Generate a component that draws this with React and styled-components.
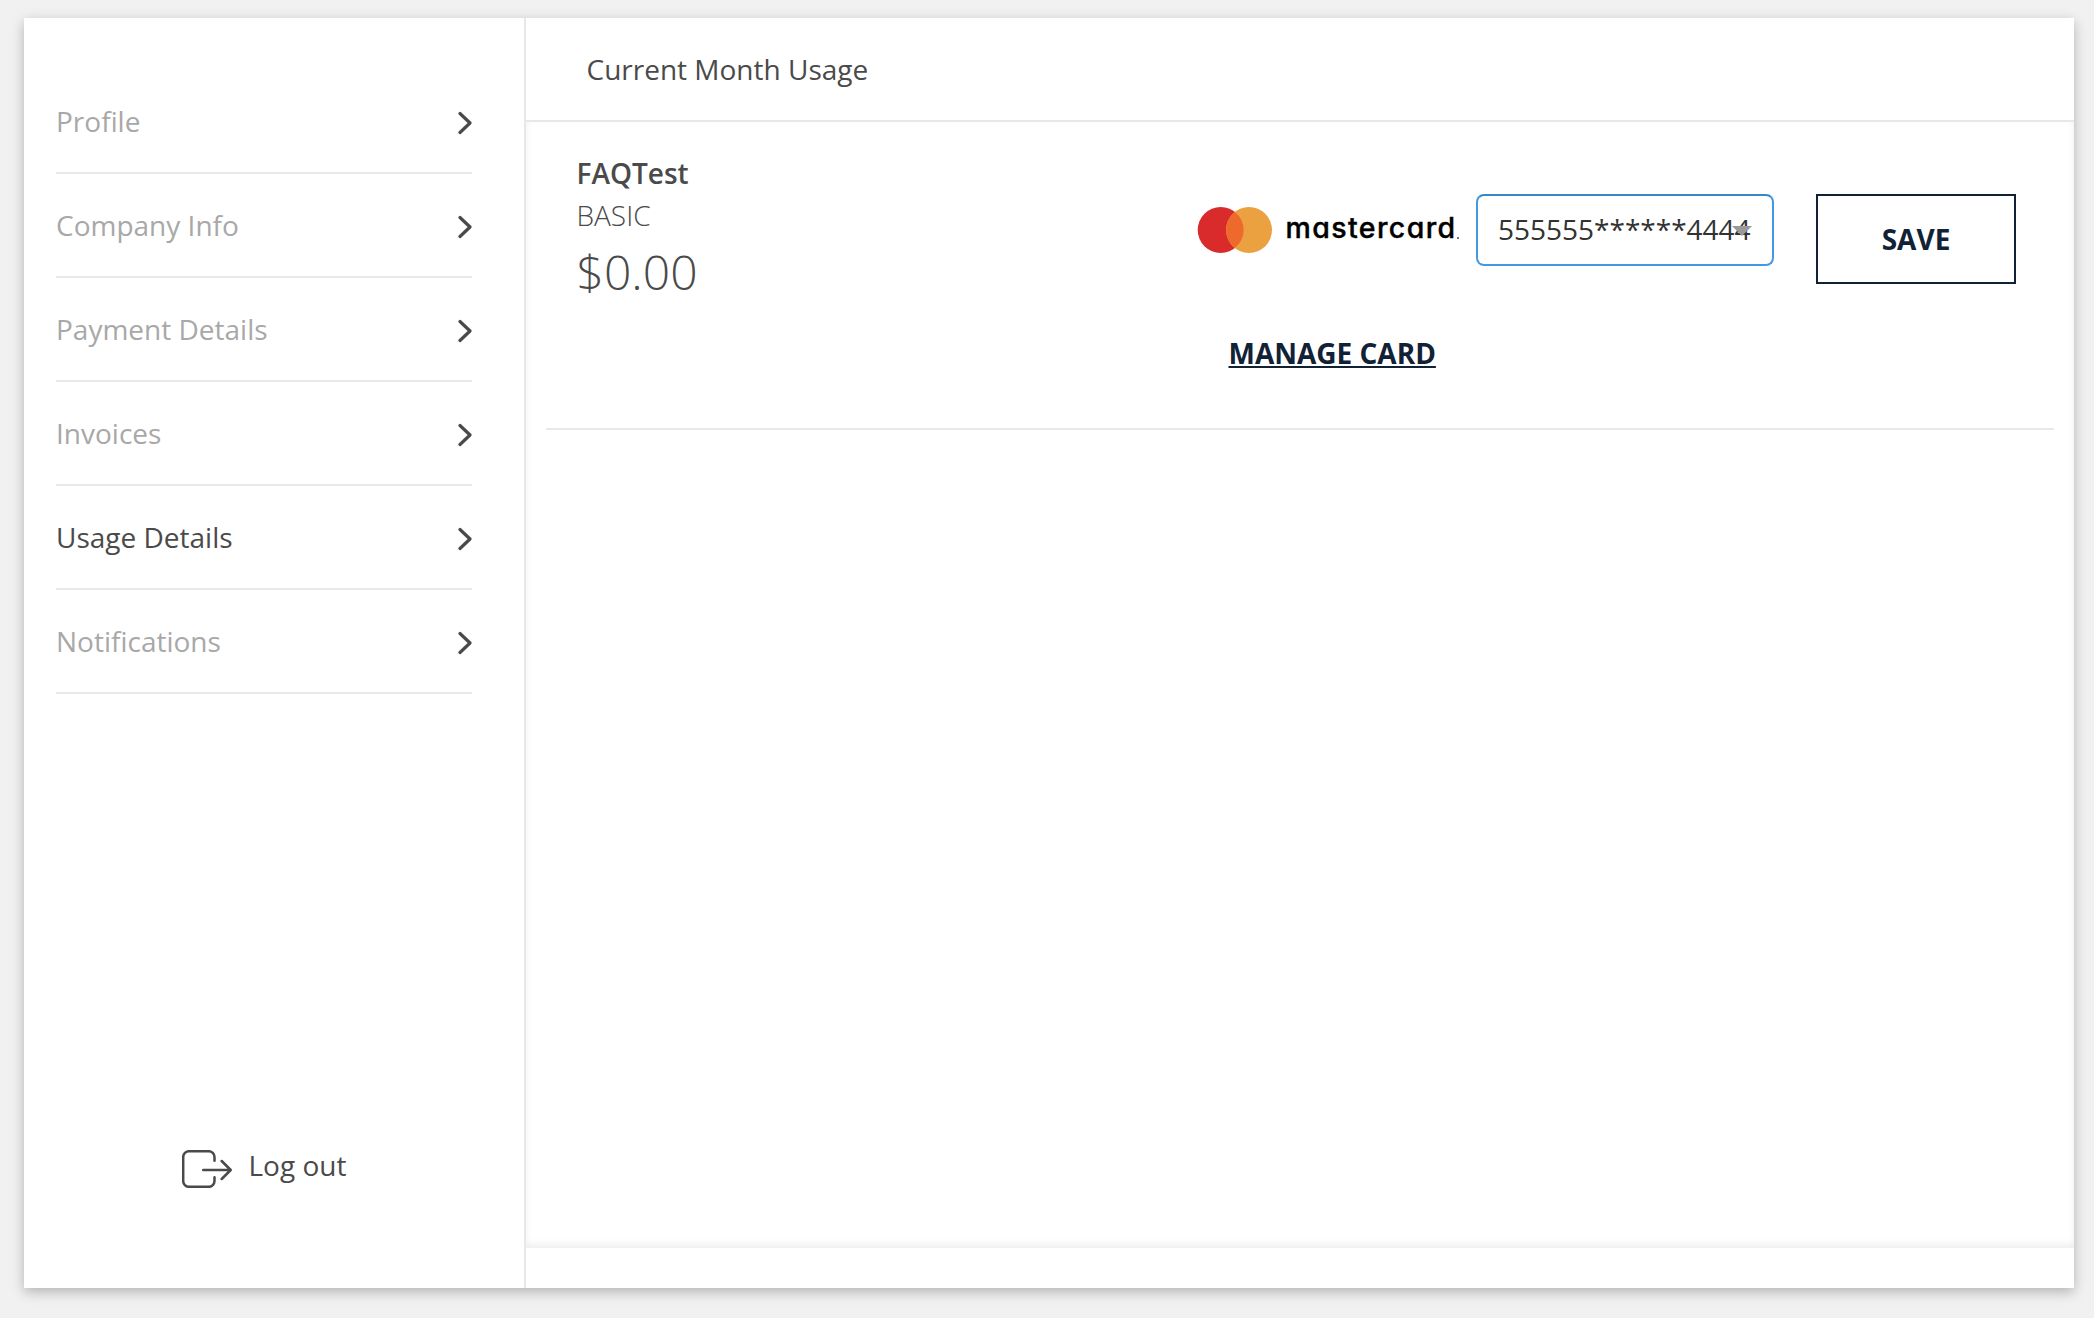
import React from "react";
import styled, { createGlobalStyle } from "styled-components";

const ink = "#4a4a4a";
const navy = "#112236";
const line = "#e8e8e8";

const GlobalStyle = createGlobalStyle`
  *, *::before, *::after { box-sizing: border-box; }
  html, body { margin: 0; padding: 0; background: #f1f1f1; }
  body {
    font-family: "Open Sans", "Noto Sans", sans-serif;
    font-size: 28px;
    line-height: 38px;
    color: ${ink};
  }
`;

const Page = styled.div`
  height: 1318px;
  padding: 18px 20px 30px 24px;
  background: #f1f1f1;
  overflow: hidden;
`;

const Card = styled.div`
  display: flex;
  height: 100%;
  background: #fff;
  box-shadow: 0 4px 12px 0 rgba(0, 0, 0, 0.26);
`;

const Sidebar = styled.aside`
  display: flex;
  flex-direction: column;
  width: 502px;
  padding: 52px 52px 93px 32px;
  border-right: 2px solid ${line};
`;

const NavItem = styled.a`
  display: flex;
  align-items: center;
  justify-content: space-between;
  height: 104px;
  border-bottom: 2px solid ${line};
  color: ${(p) => (p.$active ? ink : "#a8a8a8")};
`;

const Chevron = styled.svg`
  display: block;
  width: 14px;
  height: 24px;
  margin-top: 4px;
  fill: none;
  stroke: ${ink};
  stroke-width: 3.2;
  stroke-linecap: round;
  stroke-linejoin: round;
`;

const Logout = styled.a`
  display: flex;
  align-items: center;
  gap: 16.5px;
  margin: auto 0 0 126px;
  padding-bottom: 7px;
`;

const LogoutIcon = styled.svg`
  display: block;
  width: 50px;
  height: 38px;
  margin-top: 8px;
  fill: none;
  stroke: ${ink};
  stroke-width: 2.5;
  stroke-linecap: round;
  stroke-linejoin: round;
`;

const Main = styled.main`
  display: flex;
  flex: 1;
  flex-direction: column;
`;

const Header = styled.header`
  display: flex;
  align-items: center;
  height: 104px;
  padding-left: 60.5px;
  border-bottom: 2px solid ${line};
`;

const Content = styled.section`
  flex: 1;
  padding: 0 20px;
  margin-bottom: 40px;
  box-shadow: inset 0 -4px 10px -2px rgba(0, 0, 0, 0.09);
`;

const PlanRow = styled.div`
  display: flex;
  justify-content: space-between;
  height: 308px;
  padding: 32px 38px 0 30.5px;
  border-bottom: 2px solid ${line};
`;

const Plan = styled.div`
  display: flex;
  flex-direction: column;
`;

const PlanName = styled.strong`
  font-weight: 600;
`;

const PlanTier = styled.span`
  margin-top: 4px;
  font-weight: 300;
`;

const PlanPrice = styled.span`
  margin-top: 5px;
  font-size: 48px;
  line-height: 66px;
  font-weight: 300;
`;

const Billing = styled.div`
  display: flex;
  align-items: flex-start;
  padding-top: 40px;
`;

const CardColumn = styled.div`
  display: flex;
  flex-direction: column;
  align-items: flex-start;
`;

const CardPicker = styled.div`
  display: flex;
  align-items: center;
  height: 72px;
`;

const Brand = styled.div`
  display: flex;
  align-items: center;
  width: 279px;
`;

const BrandMark = styled.svg`
  display: block;
  width: 75px;
  height: 46px;
`;

const BrandName = styled.span`
  margin: -5px 0 0 13.5px;
  font-family: Inter, "Open Sans", sans-serif;
  font-feature-settings: "cv11" 1;
  font-size: 28.5px;
  font-weight: 500;
  letter-spacing: 1.4px;
  color: #000;
  -webkit-text-stroke: 0.4px #000;
`;

const BrandDot = styled.i`
  width: 2px;
  height: 2px;
  margin: 15px 0 0 0.5px;
  background: #777;
`;

const Select = styled.div`
  position: relative;
  width: 298px;
  height: 72px;
  padding: 14px 0 0 20px;
  border: 2px solid #4299e1;
  border-top-color: #3a87c8;
  border-radius: 8px;
  color: #333;
  white-space: nowrap;

  &::after {
    content: "";
    position: absolute;
    top: 30px;
    right: 20px;
    border: 10px solid transparent;
    border-top-color: #999;
    border-bottom: 0;
  }
`;

const SaveButton = styled.button`
  width: 200px;
  height: 90px;
  margin-left: 42px;
  padding: 0;
  border: 2px solid ${navy};
  background: #fff;
  font: 700 28px/38px "Open Sans", sans-serif;
  color: ${navy};
`;

const ManageLink = styled.a`
  margin: 68px 0 0 31.5px;
  font-weight: 700;
  color: ${navy};
  text-decoration: underline;
  text-decoration-thickness: 2px;
  text-underline-offset: 2px;
  text-decoration-skip-ink: none;
`;

const items = [
  "Profile",
  "Company Info",
  "Payment Details",
  "Invoices",
  "Usage Details",
  "Notifications",
];

export default function App() {
  return (
    <>
      <GlobalStyle />
      <Page>
        <Card>
          <Sidebar>
            <nav>
              {items.map((label) => (
                <NavItem key={label} $active={label === "Usage Details"}>
                  <span>{label}</span>
                  <Chevron viewBox="0 0 14 24">
                    <path d="M2 2.5 12 12 2 21.5" />
                  </Chevron>
                </NavItem>
              ))}
            </nav>
            <Logout>
              <LogoutIcon viewBox="0 0 50 38">
                <path d="M32.5 10.7V7a5.8 5.8 0 0 0-5.8-5.8H7A5.8 5.8 0 0 0 1.2 7v24A5.8 5.8 0 0 0 7 36.8h19.7a5.8 5.8 0 0 0 5.8-5.8v-3.7" />
                <path d="M21.2 20h27M39.7 11l9 9-9 9" />
              </LogoutIcon>
              <span>Log out</span>
            </Logout>
          </Sidebar>
          <Main>
            <Header>Current Month Usage</Header>
            <Content>
              <PlanRow>
                <Plan>
                  <PlanName>FAQTest</PlanName>
                  <PlanTier>BASIC</PlanTier>
                  <PlanPrice>$0.00</PlanPrice>
                </Plan>
                <Billing>
                  <CardColumn>
                    <CardPicker>
                      <Brand>
                        <BrandMark viewBox="0 0 75 46">
                          <circle cx="23.7" cy="23" r="23" fill="#d92b2b" />
                          <circle cx="52" cy="23" r="23" fill="#eba13f" />
                          <path d="M37.85 4.9a23 23 0 0 1 0 36.2a23 23 0 0 1 0-36.2z" fill="#ed6a2c" />
                        </BrandMark>
                        <BrandName>mastercard</BrandName>
                        <BrandDot />
                      </Brand>
                      <Select>555555******4444</Select>
                    </CardPicker>
                    <ManageLink>MANAGE CARD</ManageLink>
                  </CardColumn>
                  <SaveButton>SAVE</SaveButton>
                </Billing>
              </PlanRow>
            </Content>
          </Main>
        </Card>
      </Page>
    </>
  );
}
